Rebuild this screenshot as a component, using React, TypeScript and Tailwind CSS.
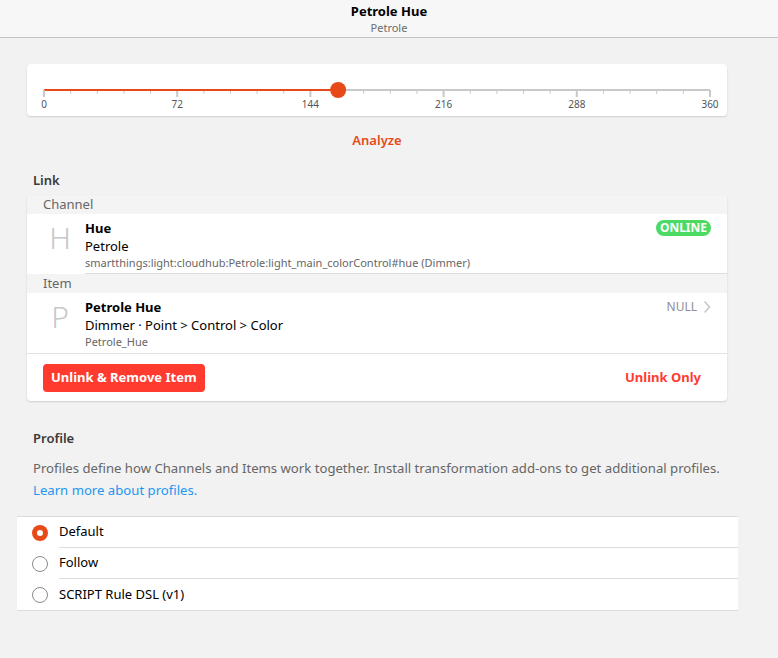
import React from "react";

const font = { fontFamily: '"Noto Sans", "Open Sans", sans-serif' };

function Slider() {
  const left = 17;
  const width = 666;
  const value = 159;
  const pos = left + (value / 360) * width;
  const ticks = Array.from({ length: 26 }, (_, i) => i);
  return (
    <svg width="700" height="52" className="block">
      <line x1={left} y1={26} x2={left + width} y2={26} stroke="#c8c8c8" strokeWidth={2} />
      {ticks.map((i) => {
        const x = left + (i * width) / 25;
        const major = i % 5 === 0;
        return <line key={i} x1={x} y1={26} x2={x} y2={major ? 33 : 30} stroke="#c8c8c8" strokeWidth={major ? 2 : 1} />;
      })}
      <line x1={left} y1={26} x2={pos} y2={26} stroke="#e64a19" strokeWidth={2} />
      <line x1={left} y1={26} x2={left} y2={33} stroke="#c8c8c8" strokeWidth={2} />
      <circle cx={pos} cy={26} r={8} fill="#e64a19" />
      {[0, 72, 144, 216, 288, 360].map((v, i) => (
        <text key={v} x={left + (i * width) / 5} y={44} textAnchor="middle" fontSize="10" fill="#555" fontFamily='"Noto Sans", sans-serif'>
          {v}
        </text>
      ))}
    </svg>
  );
}

function Radio({ checked }: { checked?: boolean }) {
  return checked ? (
    <div className="w-4 h-4 rounded-full bg-[#e64a19] flex items-center justify-center shrink-0">
      <div className="w-[6px] h-[6px] rounded-full bg-white" />
    </div>
  ) : (
    <div className="w-4 h-4 rounded-full border border-[#8a8a8a] bg-white shrink-0" />
  );
}

export default function App() {
  return (
    <div className="min-h-[658px] bg-[#f2f2f2] text-black" style={font}>
      <div className="h-[38px] bg-[#f7f7f7] border-b border-[#c4c4c4] flex flex-col items-center">
        <div className="mt-[3px] text-[13px] font-bold leading-[16px] text-black">Petrole Hue</div>
        <div className="mt-[2px] text-[11px] leading-[14px] text-[#6d6d6d]">Petrole</div>
      </div>

      <div className="px-[27px] pt-[26px] w-[754px]">
        <div className="bg-white rounded-[4px] shadow-[0_1px_2px_rgba(0,0,0,0.15)] h-[52px]">
          <Slider />
        </div>

        <div className="mt-[17px] h-[16px] flex items-center justify-center text-[13px] font-semibold text-[#e64a19]">
          Analyze
        </div>

        <div className="mt-[24px] px-[6px] h-[16px] flex items-center text-[13px] font-semibold text-[#3a3a3a]">Link</div>

        <div className="mt-[6px] bg-white rounded-[4px] shadow-[0_1px_2px_rgba(0,0,0,0.15)] overflow-hidden">
          <div className="h-[19px] bg-[#f4f4f4] px-[16px] flex items-center text-[13px] text-[#666]">Channel</div>
          <div className="flex h-[60px]">
            <div className="w-[58px] flex justify-center pt-[6px] pl-[8px] text-[30px] font-light leading-[36px] text-[#c7c7cc]">H</div>
            <div className="flex-1 border-b border-[#dcdcdc] pt-[5px] pr-[16px] flex">
              <div className="flex-1">
                <div className="text-[13px] font-bold leading-[18px]">Hue</div>
                <div className="text-[13px] leading-[18px]">Petrole</div>
                <div className="text-[11px] leading-[16px] text-[#666]">smartthings:light:cloudhub:Petrole:light_main_colorControl#hue (Dimmer)</div>
              </div>
              <div className="flex items-start pt-[1px]">
                <div className="flex items-center h-[16px] px-[4px] rounded-full bg-[#4cd964] text-white text-[12px] font-bold leading-none">ONLINE</div>
              </div>
            </div>
          </div>
          <div className="h-[19px] bg-[#f4f4f4] px-[16px] flex items-center text-[13px] text-[#666]">Item</div>
          <div className="flex h-[61px] border-b border-[#e2e2e2]">
            <div className="w-[58px] flex justify-center pt-[6px] pl-[8px] text-[30px] font-light leading-[36px] text-[#c7c7cc]">P</div>
            <div className="flex-1 pt-[5px] pr-[16px] flex">
              <div className="flex-1">
                <div className="text-[13px] font-bold leading-[18px]">Petrole Hue</div>
                <div className="text-[13px] leading-[18px]">Dimmer · Point &gt; Control &gt; Color</div>
                <div className="text-[11px] leading-[16px] text-[#666]">Petrole_Hue</div>
              </div>
              <div className="flex items-start gap-[6px] pt-[1px] text-[12px] leading-[16px] text-[#8e8e93]">
                <span>NULL</span>
                <svg width="8" height="14" viewBox="0 0 8 14" className="mt-[1px]">
                  <path d="M1.5 1.5 L6.5 7 L1.5 12.5" fill="none" stroke="#c7c7cc" strokeWidth="1.6" />
                </svg>
              </div>
            </div>
          </div>
          <div className="h-[47px] flex items-center justify-between px-[16px]">
            <button className="h-[28px] px-[8px] rounded-[4px] bg-[#ff3b30] text-white text-[13px] font-bold">Unlink &amp; Remove Item</button>
            <span className="text-[13px] font-bold text-[#ff3b30] pr-[10px]">Unlink Only</span>
          </div>
        </div>

        <div className="mt-[30px] px-[6px] h-[16px] flex items-center text-[13px] font-semibold text-[#3a3a3a]">Profile</div>
        <div className="mt-[10px] px-[6px] text-[13.15px] leading-[22px] text-[#666]">
          Profiles define how Channels and Items work together. Install transformation add-ons to get additional profiles.
          <br />
          <span className="text-[#2196f3]">Learn more about profiles.</span>
        </div>
      </div>

      <div className="mt-[15px] ml-[17px] w-[721px] bg-white border-y border-[#dcdcdc]">
        {[
          { label: "Default", checked: true },
          { label: "Follow" },
          { label: "SCRIPT Rule DSL (v1)" },
        ].map((r, i) => (
          <div key={r.label} className="flex items-center h-[31px]">
            <div className="w-[42px] flex justify-end pr-[11px]">
              <Radio checked={r.checked} />
            </div>
            <div className={"flex-1 h-full flex items-center text-[13px] " + (i < 2 ? "border-b border-[#dcdcdc]" : "")}>{r.label}</div>
          </div>
        ))}
      </div>
    </div>
  );
}
